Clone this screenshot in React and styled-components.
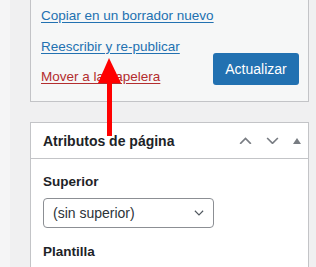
import React from "react";
import styled, { createGlobalStyle } from "styled-components";

const GlobalStyle = createGlobalStyle`
  html, body {
    margin: 0;
    padding: 0;
    background: #f0f0f1;
    font-family: "Liberation Sans", Arial, sans-serif;
    color: #1d2327;
  }
`;

const Page = styled.div`
  position: relative;
  display: flex;
  width: 316px;
  height: 267px;
  overflow: hidden;
`;

const Strip = styled.div`
  width: 10px;
  flex-shrink: 0;
  background: #f5f5f6;
`;

const Column = styled.div`
  flex: 1;
  min-width: 0;
  padding: 0 7px 0 20px;
  display: flex;
  flex-direction: column;
  gap: 20px;
`;

const PublishBox = styled.div`
  background: #f6f7f7;
  border: 1px solid #c3c4c7;
  border-top: none;
  display: flex;
  justify-content: space-between;
  align-items: flex-end;
  padding: 7px 9px 15px 10px;
`;

const Links = styled.div`
  display: flex;
  flex-direction: column;
  align-items: flex-start;
  gap: 12.5px;
  white-space: nowrap;
  flex-shrink: 0;
  width: 0;
`;

const Link = styled.a`
  font-size: 13.5px;
  line-height: 18px;
  color: ${(p) => (p.$danger ? "#b32d2e" : "#2271b1")};
  text-decoration: underline;
  text-underline-offset: 2px;
  cursor: pointer;
`;

const Button = styled.button`
  width: 86px;
  height: 32px;
  flex-shrink: 0;
  border: none;
  border-radius: 3px;
  background: #2271b1;
  color: #fff;
  font-family: inherit;
  font-size: 14px;
  margin-bottom: 1px;
  padding: 0;
`;

const Postbox = styled.div`
  background: #fff;
  border: 1px solid #c3c4c7;
  border-bottom: none;
  flex: 1;
`;

const Header = styled.div`
  height: 35px;
  border-bottom: 1px solid #c3c4c7;
  display: flex;
  align-items: center;
  padding-left: 12px;
`;

const Title = styled.h2`
  flex: 1;
  margin: 0;
  font-size: 14px;
  font-weight: 700;
  line-height: 1;
`;

const HandleButton = styled.span`
  width: ${(p) => p.$w}px;
  height: 35px;
  display: flex;
  align-items: center;
  justify-content: center;
  color: #787c82;
`;

const Body = styled.div`
  padding: 14px 12px 0 12px;
  display: flex;
  flex-direction: column;
  align-items: flex-start;
`;

const Label = styled.div`
  font-size: 13.5px;
  font-weight: 700;
  line-height: 18px;
  white-space: nowrap;
  margin-bottom: ${(p) => p.$mb || 0}px;
`;

const Select = styled.div`
  width: 171px;
  height: 30px;
  box-sizing: border-box;
  border: 1px solid #8c8f94;
  border-radius: 4px;
  display: flex;
  align-items: center;
  justify-content: space-between;
  padding: 0 9px 0 9px;
  font-size: 14px;
  color: #2c3338;
  margin-bottom: 15px;
`;

const SelectCaret = styled.span`
  display: flex;
  color: #50575e;
`;

const Arrow = styled.svg`
  position: absolute;
  left: 95px;
  top: 55px;
`;

const Chevron = ({ up, size = 13, stroke = 1.7 }) => (
  <svg width={size} height={size * 0.6} viewBox="0 0 13 8" fill="none">
    <path
      d={up ? "M1 7L6.5 1.5L12 7" : "M1 1L6.5 6.5L12 1"}
      stroke="currentColor"
      strokeWidth={stroke}
    />
  </svg>
);

const App = () => {
  return (
    <Page>
      <GlobalStyle />
      <Strip />
      <Column>
        <PublishBox>
          <Links>
            <Link>Copiar en un borrador nuevo</Link>
            <Link>Reescribir y re-publicar</Link>
            <Link $danger>Mover a la papelera</Link>
          </Links>
          <Button>Actualizar</Button>
        </PublishBox>
        <Postbox>
          <Header>
            <Title>Atributos de página</Title>
            <HandleButton $w={27}>
              <Chevron up />
            </HandleButton>
            <HandleButton $w={27}>
              <Chevron />
            </HandleButton>
            <HandleButton $w={22}>
              <svg width="8" height="6" viewBox="0 0 8 6">
                <path d="M4 0L8 6H0Z" fill="currentColor" />
              </svg>
            </HandleButton>
          </Header>
          <Body>
            <Label $mb={7}>Superior</Label>
            <Select>
              <span>(sin superior)</span>
              <SelectCaret>
                <Chevron size={10} stroke={1.5} />
              </SelectCaret>
            </Select>
            <Label>Plantilla</Label>
          </Body>
        </Postbox>
      </Column>
      <Arrow width="30" height="82" viewBox="0 0 30 82">
        <polygon points="14,3 3,28 26,28" fill="#ff0000" />
        <rect x="12" y="26" width="5" height="55" fill="#ff0000" />
      </Arrow>
    </Page>
  );
};

export default App;
